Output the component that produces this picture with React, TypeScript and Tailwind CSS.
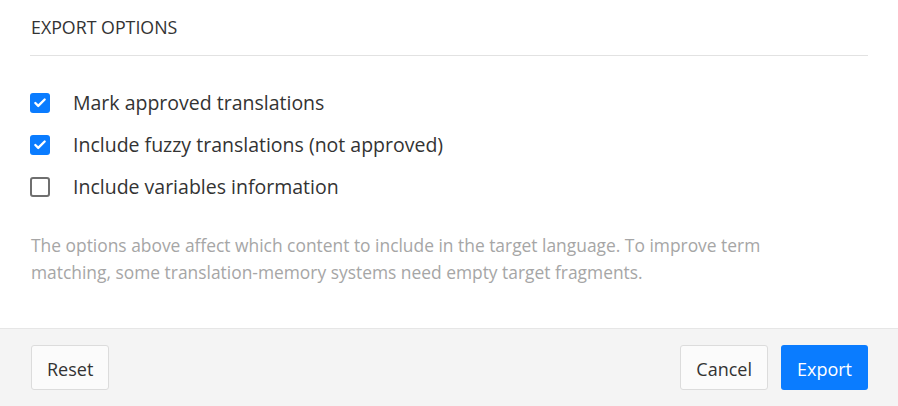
import { Check } from 'lucide-react';

type OptionProps = {
  label: string;
  checked: boolean;
};

const Option = ({ label, checked }: OptionProps) => (
  <label className="flex items-center h-[42px]">
    {checked ? (
      <span className="w-5 h-5 rounded-[3px] bg-[#0a7cff] flex items-center justify-center">
        <Check className="w-[14px] h-[14px] text-white" strokeWidth={4} />
      </span>
    ) : (
      <span className="w-5 h-5 rounded-[3px] border-2 border-[#6f6f6f] bg-white" />
    )}
    <span className="ml-[23px] text-[19.5px] text-[#333]">{label}</span>
  </label>
);

const App = () => {
  return (
    <div className="w-[898px] h-[406px] bg-white flex flex-col font-['Open_Sans',sans-serif]">
      {/* Body */}
      <div className="flex-1 px-[30px]">
        <div className="h-[56px] flex items-center border-b border-[#e2e2e2] text-[17.8px] text-[#333] pl-px">
          EXPORT OPTIONS
        </div>
        <div className="pt-[26px]">
          <Option label="Mark approved translations" checked />
          <Option label="Include fuzzy translations (not approved)" checked />
          <Option label="Include variables information" checked={false} />
        </div>
        <p className="mt-[24px] text-[17.4px] leading-[27px] text-[#a6a6a6] pl-px">
          The options above affect which content to include in the target language. To improve term
          <br />
          matching, some translation-memory systems need empty target fragments.
        </p>
      </div>

      {/* Footer */}
      <div className="h-[78px] bg-[#f4f4f4] border-t border-[#e6e6e6] px-[30px] flex items-center justify-between">
        <button className="h-[45px] px-[15px] pt-[3px] ml-px bg-[#fbfbfb] border border-[#dcdcdc] rounded-[3px] text-[18px] text-[#333]">
          Reset
        </button>
        <div className="flex gap-[13px]">
          <button className="h-[45px] px-[15px] pt-[3px] bg-[#fbfbfb] border border-[#dcdcdc] rounded-[3px] text-[18px] text-[#333]">
            Cancel
          </button>
          <button className="h-[45px] px-[16px] pt-[3px] bg-[#0a7cff] rounded-[3px] text-[18px] text-white">
            Export
          </button>
        </div>
      </div>
    </div>
  );
};

export default App;
